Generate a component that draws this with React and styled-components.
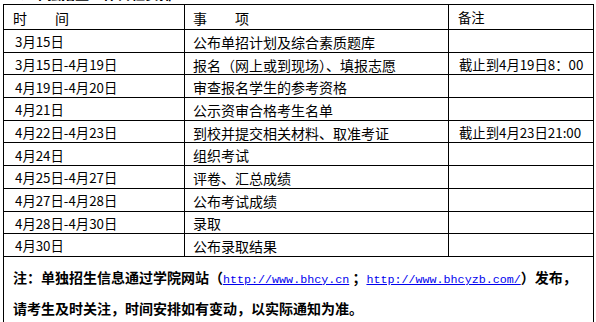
import React from 'react'
import styled, { createGlobalStyle } from 'styled-components'

const GlobalStyle = createGlobalStyle`
  html, body {
    margin: 0;
    padding: 0;
    background: #fff;
  }
  body {
    font-family: "Noto Sans CJK SC", "Noto Sans", sans-serif;
    color: #000;
  }
`

const Page = styled.div`
  width: 596px;
  height: 322px;
  overflow: hidden;
  padding-left: 3px;
  box-sizing: border-box;
`
// only the foot of this heading is still inside the shot
const Title = styled.div`
  margin-top: -15px;
  height: 19px;
  line-height: 16px;
  font-size: 14px;
  font-weight: bold;
  padding-left: 2px;
  white-space: pre;
`
const Table = styled.table`
  width: 590px;
  border-collapse: collapse;
  table-layout: fixed;
`
const Col = styled.col`
  width: ${props => props.$width}px;
`
const Cell = styled.td`
  border: 1px solid #000;
  height: ${props => props.$height}px;
  padding: 2px 0 0 ${props => props.$pad}px;
  box-sizing: border-box;
  font-size: ${props => props.$size}px;
  line-height: 1;
  vertical-align: middle;
  white-space: pre;
  overflow: hidden;
`
const NoteCell = styled.td`
  border: 1px solid #000;
  padding: 6px 0 0 9px;
  height: 62px;
  box-sizing: border-box;
  vertical-align: top;
  font-size: 14px;
  font-weight: bold;
  line-height: 28px;
  white-space: nowrap;
`
const SiteLink = styled.a`
  color: #0000ee;
  text-decoration: underline;
  font-family: "Liberation Mono", monospace;
  font-size: 11.7px;
  font-weight: normal;
`

const rows = [
  ['3月15日', '公布单招计划及综合素质题库', ''],
  ['3月15日-4月19日', '报名（网上或到现场）、填报志愿', '截止到4月19日8：00'],
  ['4月19日-4月20日', '审查报名学生的参考资格', ''],
  ['4月21日', '公示资审合格考生名单', ''],
  ['4月22日-4月23日', '到校并提交相关材料、取准考证', '截止到4月23日21:00'],
  ['4月24日', '组织考试', ''],
  ['4月25日-4月27日', '评卷、汇总成绩', ''],
  ['4月27日-4月28日', '公布考试成绩', ''],
  ['4月28日-4月30日', '录取', ''],
  ['4月30日', '公布录取结果', ''],
]

export default function App() {
  return (
    <>
      <GlobalStyle />
      <Page>
        <Title>三、单独招生工作日程安排</Title>
        <Table>
          <colgroup>
            <Col $width={181} />
            <Col $width={264} />
            <Col $width={145} />
          </colgroup>
          <tbody>
            <tr>
              <Cell $height={25} $pad={9} $size={14}>时　　间</Cell>
              <Cell $height={25} $pad={8} $size={14}>事　　项</Cell>
              <Cell $height={25} $pad={9} $size={13.33}>备注</Cell>
            </tr>
            {rows.map(([date, item, remark]) => (
              <tr key={date}>
                <Cell $height={22.7} $pad={11} $size={13.33}>{date}</Cell>
                <Cell $height={22.7} $pad={8} $size={14}>{item}</Cell>
                <Cell $height={22.7} $pad={10} $size={13.33}>{remark}</Cell>
              </tr>
            ))}
            <tr>
              <NoteCell colSpan={3}>
                注：单独招生信息通过学院网站（<SiteLink href="#">http://www.bhcy.cn</SiteLink> ；<SiteLink href="#">http://www.bhcyzb.com/</SiteLink>）发布，
                <br />
                请考生及时关注，时间安排如有变动，以实际通知为准。
              </NoteCell>
            </tr>
          </tbody>
        </Table>
      </Page>
    </>
  )
}
